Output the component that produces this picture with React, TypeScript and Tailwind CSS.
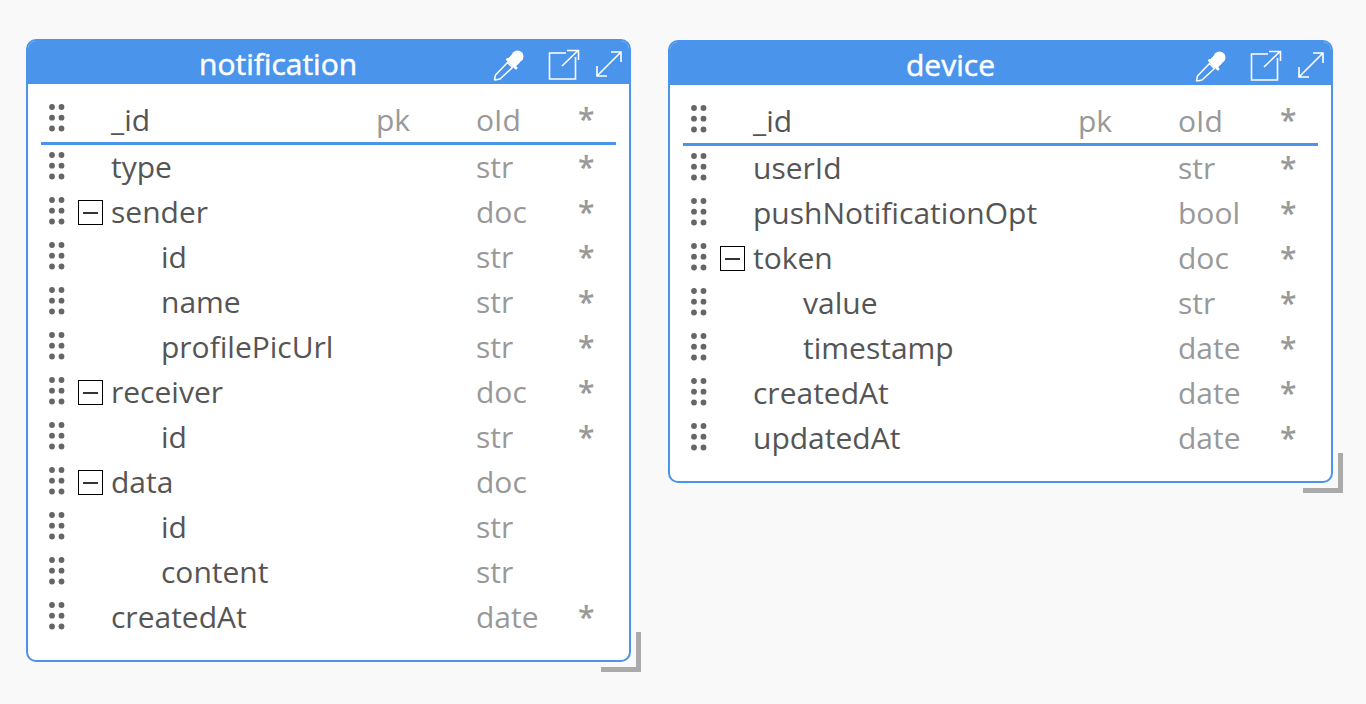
const font = { fontFamily: '"Open Sans", sans-serif' };

type Field = {
  name: string;
  pk?: boolean;
  type: string;
  req?: boolean;
  indent?: boolean;
  toggle?: boolean;
};

const notification: Field[] = [
  { name: "_id", pk: true, type: "oId", req: true },
  { name: "type", type: "str", req: true },
  { name: "sender", type: "doc", req: true, toggle: true },
  { name: "id", type: "str", req: true, indent: true },
  { name: "name", type: "str", req: true, indent: true },
  { name: "profilePicUrl", type: "str", req: true, indent: true },
  { name: "receiver", type: "doc", req: true, toggle: true },
  { name: "id", type: "str", req: true, indent: true },
  { name: "data", type: "doc", toggle: true },
  { name: "id", type: "str", indent: true },
  { name: "content", type: "str", indent: true },
  { name: "createdAt", type: "date", req: true },
];

const device: Field[] = [
  { name: "_id", pk: true, type: "oId", req: true },
  { name: "userId", type: "str", req: true },
  { name: "pushNotificationOpt", type: "bool", req: true },
  { name: "token", type: "doc", req: true, toggle: true },
  { name: "value", type: "str", req: true, indent: true },
  { name: "timestamp", type: "date", req: true, indent: true },
  { name: "createdAt", type: "date", req: true },
  { name: "updatedAt", type: "date", req: true },
];

function Grip() {
  return (
    <svg width="16" height="28" viewBox="0 0 16 28" className="shrink-0 fill-[#666666]">
      {[3, 13.7, 24.5].map((y) => (
        <g key={y}>
          <circle cx="3" cy={y} r="2.9" />
          <circle cx="12.5" cy={y} r="2.9" />
        </g>
      ))}
    </svg>
  );
}

function Toggle() {
  return (
    <div className="flex h-[25px] w-[25px] items-center justify-center border border-black bg-white">
      <div className="h-[2px] w-[15px] bg-[#333333]" />
    </div>
  );
}

function Dropper() {
  return (
    <svg width="34" height="34" viewBox="0 0 34 34" className="text-white">
      <circle cx="25.5" cy="9.5" r="6" fill="currentColor" />
      <path d="M20 7.5 L28 15.5 L23 20 L15 12.5 Z" fill="currentColor" />
      <path d="M15.5 12.5 L24 21" stroke="currentColor" strokeWidth="3" strokeLinecap="round" />
      <path d="M15.5 15.5 L20.5 20.5 L8 32 L3 33 L2.5 32.5 L3.5 28 Z" fill="none" stroke="currentColor" strokeWidth="1.5" strokeLinejoin="round" />
    </svg>
  );
}

function Popout() {
  return (
    <svg width="32" height="32" viewBox="0 0 32 32" fill="none" stroke="currentColor" strokeWidth="1.6" className="text-white">
      <path d="M18 5 H1.5 V31 H27.5 V9" />
      <path d="M14 18 L30 2.5 M19 2.5 H30.5 V12" />
    </svg>
  );
}

function Expand() {
  return (
    <svg width="28" height="28" viewBox="0 0 28 28" fill="none" stroke="currentColor" strokeWidth="1.6" className="text-white">
      <path d="M2 26 L26 2 M16 2 H26 V12 M2 16 V26 H12" />
    </svg>
  );
}

function Row({ field, first }: { field: Field; first: boolean }) {
  const textOffset = first ? "mt-[1px]" : "-mt-[2px]";
  return (
    <div
      className={`grid grid-cols-[37px_33px_1fr_100px_102px_38px] items-center text-[30px] leading-none ${
        first ? "h-[48px] border-b-[3px] border-[#4a94ec]" : "h-[45px]"
      }`}
    >
      <div className="-mt-[3px] pl-[8px]"><Grip /></div>
      <div>{field.toggle && <Toggle />}</div>
      <div className={`${textOffset} whitespace-nowrap text-[#555555] ${field.indent ? "pl-[50px]" : ""}`}>
        {field.name}
      </div>
      <div className={`${textOffset} text-[#999999]`}>{field.pk ? "pk" : ""}</div>
      <div className={`${textOffset} text-[#999999]`}>{field.type}</div>
      <div className={`-mt-[2px] font-semibold text-[#999999]`}>{field.req ? "*" : ""}</div>
    </div>
  );
}

function Table({ title, fields, className, titleClass }: { title: string; fields: Field[]; className: string; titleClass: string }) {
  return (
    <div className={`absolute ${className}`}>
      <div className="relative h-full w-full overflow-hidden rounded-[10px] border-2 border-[#4a94ec] bg-white">
        <div className="relative flex h-[43px] items-center bg-[#4a94ec] text-white">
          <div className={`mt-[3px] text-[30px] leading-none font-medium [-webkit-text-stroke:0.5px_white] ${titleClass}`}>{title}</div>
          <div className="absolute top-[6px] right-[6px] flex items-center">
            <div className="mr-[22px]"><Dropper /></div>
            <div className="mr-[15px]"><Popout /></div>
            <div><Expand /></div>
          </div>
        </div>
        <div className="pt-[13px] pr-[13px] pl-[13px]">
          {fields.map((f, i) => (
            <Row key={i} field={f} first={i === 0} />
          ))}
        </div>
      </div>
      <div className="absolute -right-[10px] -bottom-[10px] h-[40px] w-[40px] border-r-[5px] border-b-[5px] border-[#aaaaaa]" />
    </div>
  );
}

export default function App() {
  return (
    <div className="relative h-[704px] w-[1366px] overflow-hidden bg-[#f9f9f9]" style={font}>
      <Table title="notification" fields={notification} className="top-[39px] left-[26px] h-[623px] w-[605px]" titleClass="ml-[171px]" />
      <Table title="device" fields={device} className="top-[40px] left-[668px] h-[443px] w-[665px]" titleClass="ml-[236px]" />
    </div>
  );
}
